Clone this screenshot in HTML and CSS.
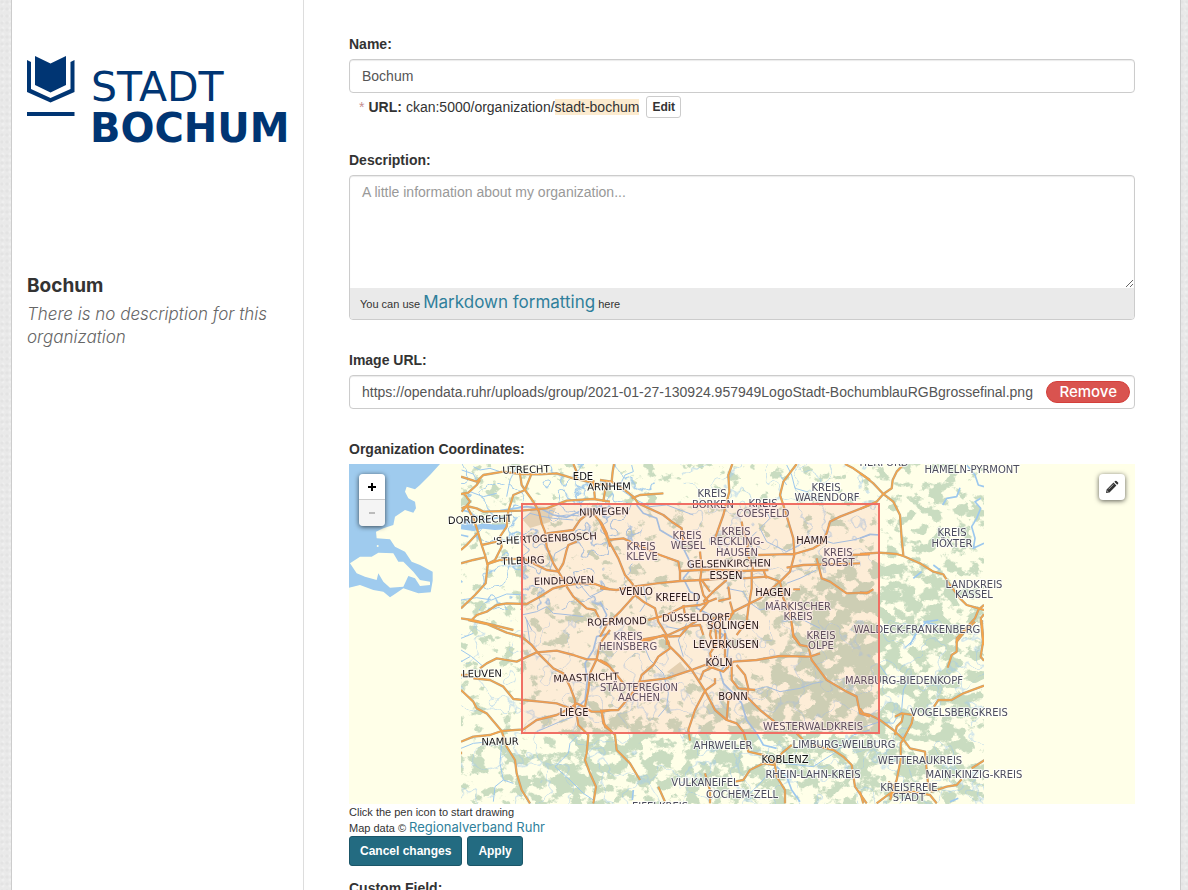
FILE: index.html
```html
<!DOCTYPE html>
<html lang="en">
<head>
<meta charset="utf-8">
<meta name="viewport" content="width=device-width, initial-scale=1">
<title>Bochum - Edit organization</title>
<link rel="stylesheet" href="styles.css">
</head>
<body>
<div class="wrapper">
  <aside class="sidebar">
    <svg class="logo" viewBox="0 0 262 90" role="img" aria-label="Stadt Bochum">
      <path d="M8 0L23.500 7.500L39 0V29L23.500 36.500L8 29Z"/>
      <path d="M0 4L4 6V33L23.500 42L43.500 33V6L47.500 4V36L23.500 46.500L0 36Z"/>
      <path d="M0 56H47.500V60H0Z"/>
      <text class="logo-light" x="64" y="45">STADT</text>
      <text class="logo-bold" x="63" y="86">BOCHUM</text>
    </svg>
    <h1 class="org-name">Bochum</h1>
    <p class="org-empty">There is no description for this organization</p>
  </aside>
  <main class="main">
    <form class="form">
      <div class="group">
        <label for="name">Name:</label>
        <input class="control" id="name" type="text" value="Bochum">
        <p class="slug"><span class="required">*</span><strong>URL:</strong>ckan:5000/organization/<span class="slug-value">stadt-bochum</span><button class="edit" type="button">Edit</button></p>
      </div>
      <div class="group">
        <label for="description">Description:</label>
        <div class="editor">
          <textarea id="description" placeholder="A little information about my organization..."></textarea>
          <p class="editor-info">You can use <a href="#markdown">Markdown formatting</a> here</p>
        </div>
      </div>
      <div class="group">
        <label for="image">Image URL:</label>
        <div class="upload">
          <input class="control" id="image" type="text" value="https://opendata.ruhr/uploads/group/2021-01-27-130924.957949LogoStadt-BochumblauRGBgrossefinal.png">
          <button class="remove" type="button">Remove</button>
        </div>
      </div>
      <section class="coords">
        <h2 class="label">Organization Coordinates:</h2>
        <div class="map">
          <svg class="map-canvas" viewBox="349 464 786 340" preserveAspectRatio="xMidYMid slice" role="img" aria-label="Map">
            <defs>
              <clipPath id="tiles"><path d="M461 464H984V804H461Z"/></clipPath>
              <filter id="soft" x="-30%" y="-30%" width="160%" height="160%"><feGaussianBlur stdDeviation="14"/></filter>
              <filter id="woods" filterUnits="userSpaceOnUse" x="461" y="464" width="523" height="340" color-interpolation-filters="sRGB">
                <feTurbulence type="fractalNoise" baseFrequency=".07 .085" numOctaves="6" seed="21"/>
                <feColorMatrix values="0 0 0 0 0  0 0 0 0 0  0 0 0 0 0  1 0 0 0 0" result="n"/>
                <feComposite in="n" in2="SourceGraphic" operator="arithmetic" k2="1" k3=".5"/>
                <feComponentTransfer result="m"><feFuncA type="linear" slope="12" intercept="-8.900"/></feComponentTransfer>
                <feFlood flood-color="#c9dcc0"/>
                <feComposite in2="m" operator="in"/>
              </filter>
              <filter id="streams" filterUnits="userSpaceOnUse" x="461" y="464" width="523" height="340" color-interpolation-filters="sRGB">
                <feTurbulence type="fractalNoise" baseFrequency=".035" numOctaves="3" seed="12"/>
                <feColorMatrix values="0 0 0 0 0  0 0 0 0 0  0 0 0 0 0  1 0 0 0 0"/>
                <feComponentTransfer result="m"><feFuncA type="table" tableValues="0 0 0 0 0 0 0 0 0 0 0 0 0 0 0 0 0 0 0 0 0 0 0 0 1 0 0 0 0 0 0 0 0 0 0 0 0 0 0 0 0 0 0 0"/></feComponentTransfer>
                <feFlood flood-color="#9ec9ec"/>
                <feComposite in2="m" operator="in" result="w"/>
                <feComposite in="w" in2="SourceGraphic" operator="in"/>
              </filter>
              <g id="roads">
                <g transform="translate(340 430) scale(.33333)">
                  <path d="M363 140L410 155L430 135L490 125L540 132L600 133L650 130L700 145L810 170M363 192L385 188L410 165L420 150M372 190L390 215L365 245M365 235L380 228L410 235L430 245L505 243L545 242L620 235L680 212L760 207L810 215"/>
                  <path d="M540 132L545 165L555 180L520 195L505 243L500 290L480 320L485 350L465 390L440 403M575 130L555 180L580 215L597 245L605 280L615 305L620 350L640 400L655 425"/>
                  <path d="M380 228L400 265L412 300L425 345L435 375L443 405L437 460L405 495L363 535M412 310L380 345L363 360M363 400L400 390L435 382M425 345L470 335M440 403L480 390L550 385L580 400L620 420L655 425L670 400L680 360L685 345L710 335M620 310L700 300L720 270L745 250"/>
                  <path d="M655 425L680 465L720 460L765 462L810 478M680 470L700 500L740 535L765 540L780 570M680 465L640 475L600 500L560 522L500 520L470 525L440 545L410 555L395 570L363 565M395 570L440 580L520 600M750 240L785 280L800 310L810 350M760 150L765 210M700 102L710 125L708 145M790 215L800 150"/>
                </g>
                <g transform="translate(600 455) scale(.33333)">
                  <path d="M0 75L35 80L38 50L42 27M35 80L70 102L100 125L115 145L190 180L215 200L245 220L250 260M190 115L120 120L95 130M0 200L25 255L55 310L75 360L100 390M25 255L70 250L95 262L180 300L235 320L240 350V380M0 400L50 405L100 395L170 385L240 378L305 375L380 370M100 395L105 420L60 470L20 510L0 545"/>
                  <path d="M105 420L130 440L165 460L175 500L200 540V570M397 27L385 60L388 110L370 180L345 250M590 27L550 80L540 120L550 150L565 200L580 250L583 300L570 350L540 380L480 430L400 470L385 500M583 297L540 298L475 300M583 297L640 280L665 265L680 235L690 200L720 185L810 150M560 338L610 330L780 325M750 300L810 298M650 310L665 370L690 380L740 415L810 412M735 27L760 40L810 75"/>
                  <path d="M240 348L300 345L350 345L420 348L505 345M300 290L305 340L300 380L310 420L325 440L300 470M305 375L330 410M380 375L345 405L310 440M455 345V400L445 460L440 500L410 540M430 370L500 365L540 380L550 430L570 470L580 540L600 570M490 345L500 370M580 403H600M385 395L390 430L355 438M390 440L400 475L340 490L330 540L345 580M145 495L200 480L250 455L300 450L350 430M120 555L205 540L260 515L300 510L310 540M250 450L255 480M425 200L430 230L445 260L440 290L460 345M360 490V560L370 580"/>
                </g>
                <g transform="translate(860 455) scale(.33333)">
                  <path d="M0 55L15 65L40 85L70 117L95 100L98 75L110 50L130 30M70 117L50 140L0 162M70 117L100 140L120 180L125 250L130 300M0 297L60 293L110 297L130 303L180 325L220 350L250 358L270 390L300 430L320 450L372 465M372 450L355 465L345 490L290 550L290 565M372 478L362 490L365 520L370 570M0 412L20 415L40 403"/>
                </g>
                <g transform="translate(340 620) scale(.33333)">
                  <path d="M385 0L440 12L500 38L545 50L575 75L595 100L640 145L670 160L690 200L705 240V280M420 145L440 130L470 115L530 125L590 97L650 92L700 105L740 118L770 118L810 140M400 175L450 180L490 200L520 237L600 245L650 250L690 265M363 165L390 165M363 210L400 245L410 265L440 280L485 333M363 365L400 350L450 345L485 333L550 328L590 300L650 285L690 265L710 250L735 262L755 275L790 275L810 270"/>
                  <path d="M485 333L500 380L525 420L530 460L545 510L570 550M810 30L780 70L770 118L750 160L745 210L735 260M710 280L715 315L745 345L740 400L735 420L750 460L768 500L760 550M785 275L795 320L810 330M363 395V403"/>
                </g>
                <g transform="translate(600 620) scale(.33333)">
                  <path d="M0 272L55 270L85 235L115 195L125 165L160 135L175 110L210 85L205 65L190 45L150 60L125 63M0 120L20 130L50 165L70 190M120 185L200 175L280 148L315 135L370 155L400 125L470 120L540 108L630 110L660 100M205 75L240 110L275 150L315 212L345 270L380 300L410 310L430 335L440 370L445 395L490 405L525 430"/>
                  <path d="M315 212L285 270L265 330L270 362M345 175L345 190L315 212M5 275L10 310L45 345L50 390L90 430L120 480M205 50L240 48L270 15L295 0M345 10L350 70L330 100L340 145M375 40L375 110L395 130L395 180L415 205L465 210M410 135L435 165L445 205L440 230L480 270L530 310M380 300L385 240L395 225M300 180L310 155L340 140"/>
                  <path d="M575 10L580 50L600 75L625 80L635 120L680 180L740 215L770 230L780 280L810 290M590 340L610 360M575 375L545 400L525 430M640 375L700 390L730 410L755 435L765 500L800 550M405 485L430 480L450 450L490 430L525 435L530 470L555 510V550M175 500L195 545M315 460L330 510V550"/>
                </g>
                <g transform="translate(860 620) scale(.33333)">
                  <path d="M0 265L10 280L30 285L60 300L100 330L130 358L150 385L195 395L200 450L205 500L215 515L260 500L290 495L305 478M130 358L122 370V420L110 480L90 530M105 345L110 320L125 305L130 280M105 290L125 280L160 285L155 310L130 358M222 260L235 240L275 240L310 220L372 197M374 420L335 445M263 143L275 105L290 95L290 65L310 40L345 5M365 0L370 60L362 110L372 122M50 550L90 520L160 515L210 525L230 550M0 515L10 550M85 485L105 500L90 540"/>
                </g>
              </g>
            </defs>
            <path class="land" d="M0 0H2000V1500H0Z"/>
            <g transform="translate(340 430) scale(.33333)">
              <path class="water" d="M20 102H300L270 135L240 165L225 178L200 170L195 185L205 205L225 215L228 235L220 248L195 240L165 260L160 285L130 295L108 305L110 325L150 328L165 350L195 365L215 395L240 405L278 425V452L272 487L235 490L190 475L165 492L150 502L130 485L100 480L60 465L20 475Z"/>
              <path class="land" d="M30 400L60 380L95 380L115 368L160 370L175 395L190 395L220 425L240 450L270 455V465L240 468L225 445L205 438L190 470L150 473L130 455L115 430L110 450L75 440L50 430Z"/>
              <circle class="land" cx="113" cy="348" r="3"/>
            </g>
            <g clip-path="url(#tiles)">
              <g filter="url(#woods)">
                <path d="M461 464H984V804H461Z" opacity=".25"/>
                <g filter="url(#soft)">
                  <path d="M775 590L820 570H900L984 620V804H870L850 740L790 700Z" opacity=".46"/>
                  <path d="M560 745L610 690L680 720L800 650L870 730V804H520Z" opacity=".44"/>
                  <path d="M900 464H984V620H880Z" opacity=".3"/>
                  <path d="M461 750H600V804H461Z" opacity=".3"/>
                  <path d="M830 572L880 570V690L830 690L790 640Z" opacity=".45"/>
                  <path d="M461 464H500V530H461Z" opacity=".2"/>
                  <path d="M480 590H600V660H480Z" opacity=".12"/>
                </g>
              </g>
              <path class="heath" d="M523 520L535 506L556 508L550 522L530 528ZM667 672L680 662L688 672L674 676Z"/>
              <g filter="url(#streams)">
                <path d="M461 464H660L620 610H461Z"/>
                <path d="M680 464H880V560L760 600L700 570Z" opacity=".55"/>
                <path d="M461 620H984V804H461Z" opacity=".5"/>
              </g>
              <g class="river">
                <g transform="translate(340 430) scale(.33333)">
                  <path d="M365 120L400 132L415 160L390 185L430 200L470 190M400 110L420 120L450 115L480 125M500 200L510 150L530 110M363 510L410 503L455 510L500 492L560 495M545 555L590 545L620 530L640 550L690 555L730 560M555 560L575 600M650 260L680 255L720 258M630 420L645 370L690 345M700 440L750 500L790 480M545 270L570 250L600 258L640 265L700 270"/>
                  <path class="wide" d="M363 240L385 245L410 260L440 270L480 262L510 265M480 242L560 230L600 235L640 255L680 262L740 235L810 245M363 315L385 320"/>
                  <path class="estuary" d="M363 290L400 295L430 288L465 292L500 290M370 272L400 280"/>
                </g>
                <g transform="translate(600 455) scale(.33333)">
                  <path d="M0 80L50 95L100 130L150 155L200 150L280 180M60 90L75 60L100 50L95 30M560 30L575 60L585 100L620 110L640 135M560 90L540 60M490 150L510 190L480 220L500 260L560 290L600 270L630 245L700 265L760 255L810 240M470 230L440 260L470 290M560 385L600 370L650 345M390 385L380 400L430 410L445 440L480 465L540 450M130 390L140 440L120 470M550 500L600 490L660 520"/>
                  <path class="wide" d="M110 150L130 175L170 190L180 225L205 240L240 260L265 310L275 340L250 370L270 410L295 420L290 460L330 480L340 520L370 540L345 570M0 440L20 480L0 520"/>
                </g>
                <g transform="translate(860 455) scale(.33333)"><path class="wide" d="M320 30L345 60L355 90L372 95M362 130L345 140L362 160L350 190L335 215L345 250L340 280L372 265M300 98L290 125L260 130L248 150M60 240L30 238L0 250M220 330L240 345M160 370L185 350M150 570L165 540L200 500L235 495"/></g>
                <g transform="translate(340 620) scale(.33333)"><path d="M363 90L395 110L430 140M363 125L390 110M363 55L400 40M363 385L400 370L450 365M485 370L480 430L490 480L465 500L460 545M490 480L520 490M710 350L690 370L685 400L645 440L690 480L730 520L760 540M590 335L660 305L700 290M560 0L570 70L590 95"/><path class="wide" d="M810 40L770 50L760 90L735 130L742 180L735 240L710 265"/></g>
                <g transform="translate(600 620) scale(.33333)"><path d="M260 10L235 60L250 110M135 85L150 120L190 160L205 220L200 260L175 290M460 210L500 200L540 215L600 205L640 190L670 185M200 20L250 30L300 0M810 330L760 345L710 395L670 420L640 440L550 430M450 520L480 490L525 440"/><path class="wide" d="M370 20L385 70L380 130L360 155L370 190L400 220L425 250L440 300L470 340L490 375L530 385M530 440L560 470L575 510L600 545M100 510L97 540"/></g>
                <g transform="translate(860 620) scale(.33333)"><path d="M60 137L80 165M145 180L130 210L125 270L100 310L60 305L0 325M135 83L160 60L180 20M120 550L145 520"/><path class="wide" d="M190 5L230 15M270 545L295 535"/></g>
              </g>
              <use href="#roads" class="road-case"/>
              <use href="#roads" class="road"/>
            </g>
            <g class="county">
              <text x="884" y="466">HERFORD</text><text x="972" y="473">HAMELN-PYRMONT</text>
              <text x="712" y="497">KREIS</text><text x="713" y="508">BORKEN</text>
              <text x="826" y="491">KREIS</text><text x="827" y="501">WARENDORF</text>
              <text x="763" y="507">KREIS</text><text x="763" y="517">COESFELD</text>
              <text x="687" y="539">KREIS</text><text x="688" y="549">WESEL</text>
              <text x="736" y="535">KREIS</text><text x="737" y="545">RECKLING-</text><text x="737" y="556">HAUSEN</text>
              <text x="641" y="550">KREIS</text><text x="642" y="560">KLEVE</text>
              <text x="838" y="556">KREIS</text><text x="838" y="566">SOEST</text>
              <text x="952" y="536">KREIS</text><text x="952" y="547">HÖXTER</text>
              <text x="974" y="588">LANDKREIS</text><text x="974" y="598">KASSEL</text>
              <text x="798" y="610">MÄRKISCHER</text><text x="798" y="620">KREIS</text>
              <text x="628" y="640">KREIS</text><text x="628" y="650">HEINSBERG</text>
              <text x="821" y="639">KREIS</text><text x="821" y="649">OLPE</text>
              <text x="917" y="633">WALDECK-FRANKENBERG</text>
              <text x="639" y="691">STÄDTEREGION</text><text x="639" y="701">AACHEN</text>
              <text x="904" y="684">MARBURG-BIEDENKOPF</text>
              <text x="813" y="730">WESTERWALDKREIS</text><text x="959" y="716">VOGELSBERGKREIS</text>
              <text x="723" y="749">AHRWEILER</text><text x="844" y="748">LIMBURG-WEILBURG</text>
              <text x="920" y="764">WETTERAUKREIS</text><text x="813" y="778">RHEIN-LAHN-KREIS</text>
              <text x="974" y="778">MAIN-KINZIG-KREIS</text><text x="705" y="786">VULKANEIFEL</text>
              <text x="742" y="798">COCHEM-ZELL</text><text x="909" y="791">KREISFREIE</text><text x="909" y="801">STADT</text>
              <text x="660" y="810">EIFELKREIS</text>
            </g>
            <g class="city">
              <text x="526" y="473" transform="rotate(-2 526 470)">UTRECHT</text><text x="583" y="480">EDE</text>
              <text x="609" y="490" transform="rotate(-1 609 487)">ARNHEM</text>
              <text x="480" y="523" transform="rotate(-2 480 520)">DORDRECHT</text>
              <text x="604" y="515" transform="rotate(-2 604 511)">NIJMEGEN</text>
              <text x="545" y="542" transform="rotate(-3 545 538)">'S-HERTOGENBOSCH</text>
              <text x="523" y="564" transform="rotate(-2 523 560)">TILBURG</text>
              <text x="564" y="584" transform="rotate(-2 564 580)">EINDHOVEN</text>
              <text x="636" y="595">VENLO</text><text x="678" y="601">KREFELD</text>
              <text x="812" y="544">HAMM</text><text x="729" y="567" transform="rotate(-1 729 563)">GELSENKIRCHEN</text>
              <text x="726" y="579">ESSEN</text><text x="773" y="596">HAGEN</text>
              <text x="696" y="621" transform="rotate(-1 696 617)">DÜSSELDORF</text><text x="733" y="629">SOLINGEN</text>
              <text x="617" y="625" transform="rotate(-2 617 621)">ROERMOND</text><text x="726" y="648">LEVERKUSEN</text>
              <text x="719" y="666">KÖLN</text><text x="733" y="700">BONN</text>
              <text x="482" y="677" transform="rotate(-1 482 673)">LEUVEN</text>
              <text x="586" y="681" transform="rotate(-2 586 677)">MAASTRICHT</text>
              <text x="574" y="716">LIÈGE</text><text x="500" y="745" transform="rotate(-1 500 741)">NAMUR</text>
              <text x="785" y="763">KOBLENZ</text>
            </g>
            <path class="extent" d="M522 504H879V733H522Z"/>
          </svg>
          <div class="zoom">
            <button type="button" aria-label="Zoom in"><svg viewBox="0 0 10 10"><path d="M1 5H9M5 1V9"/></svg></button>
            <button type="button" aria-label="Zoom out" disabled><svg viewBox="0 0 10 10"><path d="M2 5H8"/></svg></button>
          </div>
          <button class="draw" type="button" aria-label="Draw a rectangle">
            <svg viewBox="0 0 14 14"><path d="M1 13L1.600 9.500L8.500 2.600L11.400 5.500L4.500 12.400ZM9.300 1.800L10.300.9Q10.900.4 11.500.9L13.100 2.500Q13.600 3.100 13.100 3.700L12.200 4.700Z"/><path class="shine" d="M3.500 9.300L8.400 4.400M1.800 10.500L3.500 12.200"/></svg>
          </button>
        </div>
        <p class="hint">Click the pen icon to start drawing</p>
        <p class="hint">Map data © <a href="#rvr">Regionalverband Ruhr</a></p>
        <div class="actions">
          <button type="button">Cancel changes</button>
          <button type="button">Apply</button>
        </div>
      </section>
      <div class="group">
        <label for="custom">Custom Field:</label>
        <input class="control" id="custom" type="text">
      </div>
    </form>
  </main>
</div>
</body>
</html>
```
FILE: styles.css
```css
* { box-sizing: border-box; }
body {
  margin: 0;
  padding: 0 7px 0 11px;
  height: 100vh;
  overflow: hidden;
  background:
    radial-gradient(circle at 2px 2px, #e3e3e3 1px, transparent 2px) 0 0 / 5px 7px,
    radial-gradient(circle at 3px 4px, #efefef 1px, transparent 2px) 0 0 / 7px 6px,
    #e9e9e9;
  color: #333;
  font: 14px/20px "Liberation Sans", Arial, sans-serif;
}
p, h1, h2 { margin: 0; }
button, input, textarea { font-family: inherit; }
a { color: #2f7f9b; text-decoration: none; font-family: Inter, sans-serif; }
.wrapper {
  display: flex;
  min-height: 100vh;
  background: #fff;
  border: solid #ccc;
  border-width: 0 1px;
}
.sidebar {
  flex: 0 0 25%;
  padding: 56px 14px 0 15px;
  border-right: 1px solid #ddd;
  font-family: Inter, sans-serif;
}
.logo { display: block; width: 100%; fill: #003573; overflow: visible; }
.logo-light { font: 400 41px "DejaVu Sans", sans-serif; }
.logo-bold { font: 700 40px "DejaVu Sans", sans-serif; }
.org-name { margin-top: 128px; font-size: 19px; line-height: 24px; font-weight: 700; }
.org-empty { margin-top: 5px; font-size: 17px; line-height: 23px; font-style: italic; font-weight: 300; color: #666; }
.main { flex: 1; min-width: 0; padding: 34px 45px 0; }
.group { margin-bottom: 30px; }
label, .label { display: block; margin-bottom: 5px; font-size: 14px; line-height: 20px; font-weight: 700; }
.control {
  display: block;
  width: 100%;
  height: 34px;
  padding: 6px 12px;
  border: 1px solid #ccc;
  border-radius: 4px;
  background: #fff;
  box-shadow: inset 0 1px 1px rgba(0, 0, 0, .08);
  color: #555;
  font-size: 14px;
}
.slug { display: flex; align-items: center; padding: 3px 0 0 10px; margin-bottom: 32px; line-height: 22px; }
.slug strong { margin: 0 4px; }
.required { color: #c58f8f; }
.slug-value { background: #fcebcf; line-height: 16px; }
.edit {
  height: 22px;
  margin-left: 7px;
  padding: 0 5px;
  border: 1px solid #ccc;
  border-radius: 3px;
  background: #fff;
  color: #333;
  font-size: 12px;
  font-weight: 700;
}
.editor { border: 1px solid #ccc; border-radius: 4px; overflow: hidden; box-shadow: inset 0 1px 1px rgba(0, 0, 0, .08); }
.editor textarea {
  display: block;
  width: 100%;
  height: 112px;
  padding: 6px 12px;
  border: 0;
  background: transparent;
  font-size: 14px;
  line-height: 20px;
}
.editor textarea::placeholder { color: #999; }
.editor-info { height: 31px; padding: 0 10px; background: #eaeaea; font-size: 11px; line-height: 29px; }
.editor-info a { font-size: 17px; }
.upload { position: relative; }
.remove {
  position: absolute;
  top: 6px;
  right: 5px;
  height: 22px;
  padding: 0 12px;
  border: 1px solid #d43f3a;
  border-radius: 11px;
  background: #d9534f;
  color: #fff;
  font: 500 15px/20px Inter, sans-serif;
}
.coords { margin-bottom: 12px; }
.map { position: relative; height: 340px; overflow: hidden; }
.map-canvas { display: block; width: 100%; height: 100%; }
.land { fill: #ffffe8; }
.water { fill: #9fcbee; }
.heath { fill: #e3dfbe; }
.river { fill: none; stroke: #9cc8ee; stroke-width: 3; stroke-linejoin: round; }
.river .wide { stroke-width: 5; }
.river .estuary { stroke-width: 16; }
.road-case { fill: none; stroke: #b3a388; stroke-width: 7; stroke-linejoin: round; }
.road { fill: none; stroke: #f7a548; stroke-width: 4; stroke-linejoin: round; }
.city, .county {
  font: 10px "DejaVu Sans", sans-serif;
  text-anchor: middle;
  paint-order: stroke;
  stroke: rgba(255, 255, 255, .75);
  stroke-width: 2px;
  stroke-linejoin: round;
}
.city { fill: #111; }
.county { fill: #4c4c5c; }
.extent { fill: rgba(240, 111, 100, .12); stroke: #f06f64; stroke-width: 2; }
.zoom {
  position: absolute;
  top: 10px;
  left: 10px;
  width: 26px;
  border-radius: 4px;
  overflow: hidden;
  box-shadow: 0 1px 5px rgba(0, 0, 0, .65);
}
.zoom button { display: grid; place-items: center; width: 26px; height: 26px; padding: 0; border: 0; background: #fff; }
.zoom button:first-child { border-bottom: 1px solid #ccc; }
.zoom button:disabled { background: #f4f4f4; }
.zoom svg { width: 10px; fill: none; stroke: #000; stroke-width: 2; }
.zoom button:disabled svg { stroke: #bbb; }
.draw {
  position: absolute;
  top: 10px;
  right: 10px;
  display: grid;
  place-items: center;
  width: 26px;
  height: 26px;
  padding: 0;
  border: 0;
  border-radius: 4px;
  background: #fff;
  box-shadow: 0 1px 5px rgba(0, 0, 0, .65);
}
.draw svg { width: 14px; fill: #333; }
.draw .shine { fill: none; stroke: #aaa; stroke-width: 1; }
.hint { font-size: 11px; line-height: 16px; }
.hint a { font-size: 13px; line-height: 12px; }
.actions { display: flex; gap: 5px; }
.actions button {
  height: 30px;
  padding: 0 10px;
  border: 1px solid #1b5668;
  border-radius: 3px;
  background: #236b81;
  color: #fff;
  font-size: 12px;
  font-weight: 700;
}
```
